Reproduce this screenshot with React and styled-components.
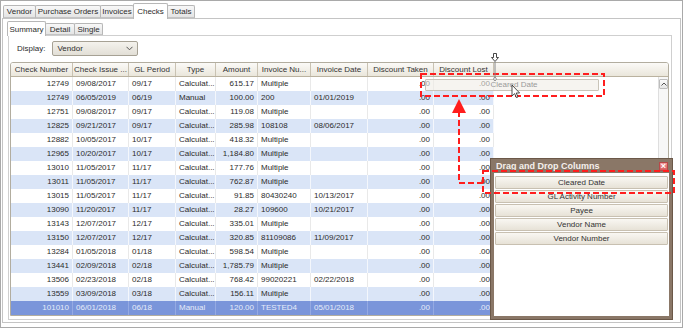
import React from "react";
import styled, { createGlobalStyle } from "styled-components";

const GlobalStyle = createGlobalStyle`
  html, body { margin: 0; padding: 0; background: #fff; }
  body { font-family: "Liberation Sans", Arial, sans-serif; }
  * { box-sizing: border-box; }
`;

const columns = [
  { title: "Check Number", width: 62, align: "right" },
  { title: "Check Issue ...", width: 56, align: "left" },
  { title: "GL Period", width: 47, align: "left" },
  { title: "Type", width: 40, align: "left" },
  { title: "Amount", width: 42, align: "right" },
  { title: "Invoice Nu...", width: 53, align: "left" },
  { title: "Invoice Date", width: 57, align: "left" },
  { title: "Discount Taken", width: 66, align: "right" },
  { title: "Discount Lost", width: 60, align: "right" },
];

const C = "Calculat...";
const rows = [
  ["12749", "09/08/2017", "09/17", C, "615.17", "Multiple", ""],
  ["12749", "06/05/2019", "06/19", "Manual", "100.00", "200", "01/01/2019"],
  ["12751", "09/08/2017", "09/17", C, "119.08", "Multiple", ""],
  ["12825", "09/21/2017", "09/17", C, "285.98", "108108", "08/06/2017"],
  ["12882", "10/05/2017", "10/17", C, "418.32", "Multiple", ""],
  ["12965", "10/20/2017", "10/17", C, "1,184.80", "Multiple", ""],
  ["13010", "11/05/2017", "11/17", C, "177.76", "Multiple", ""],
  ["13011", "11/05/2017", "11/17", C, "762.87", "Multiple", ""],
  ["13015", "11/05/2017", "11/17", C, "91.85", "80430240", "10/13/2017"],
  ["13090", "11/20/2017", "11/17", C, "28.27", "109600", "10/21/2017"],
  ["13143", "12/07/2017", "12/17", C, "335.01", "Multiple", ""],
  ["13150", "12/07/2017", "12/17", C, "320.85", "81109086", "11/09/2017"],
  ["13284", "01/05/2018", "01/18", C, "598.54", "Multiple", ""],
  ["13441", "02/09/2018", "02/18", C, "1,785.79", "Multiple", ""],
  ["13506", "02/23/2018", "02/18", C, "768.42", "99020221", "02/22/2018"],
  ["13559", "03/09/2018", "03/18", C, "156.11", "Multiple", ""],
  ["101010", "06/01/2018", "06/18", "Manual", "120.00", "TESTED4", "05/01/2018"],
].map((r) => [...r, ".00", ".00"]);

const mainTabs = [
  { label: "Vendor", width: 33 },
  { label: "Purchase Orders", width: 66 },
  { label: "Invoices", width: 34 },
  { label: "Checks", width: 35 },
  { label: "Totals", width: 28 },
];

const subTabs = [
  { label: "Summary", width: 39 },
  { label: "Detail", width: 30 },
  { label: "Single", width: 29 },
];

const extraColumns = ["Cleared Date", "GL Activity Number", "Payee", "Vendor Name", "Vendor Number"];

export default function App() {
  return (
    <>
      <GlobalStyle />
      <Frame>
        <TabStrip>
          {mainTabs.map((t) => (
            <Tab key={t.label} w={t.width} active={t.label === "Checks"}>
              {t.label}
            </Tab>
          ))}
        </TabStrip>
        <OuterPanel>
          <SubTabStrip>
            {subTabs.map((t) => (
              <SubTab key={t.label} w={t.width} active={t.label === "Summary"}>
                {t.label}
              </SubTab>
            ))}
          </SubTabStrip>
          <InnerPanel>
            <DisplayRow>
              <span>Display:</span>
              <Select>
                <span>Vendor</span>
                <svg width="7" height="5" viewBox="0 0 7 5">
                  <path d="M0.5 0.8 L3.5 3.8 L6.5 0.8" fill="none" stroke="#555" strokeWidth="1" />
                </svg>
              </Select>
            </DisplayRow>
            <Grid>
              <HeaderRow>
                {columns.map((c) => (
                  <HeadCell key={c.title} w={c.width}>
                    {c.title}
                  </HeadCell>
                ))}
              </HeaderRow>
              <GridBody>
                <Rows>
                  {rows.map((r, i) => {
                    const kind = i === rows.length - 1 ? "sel" : i % 2 ? "alt" : "plain";
                    return (
                      <Row key={i} kind={kind}>
                        {r.map((v, j) => (
                          <Cell key={j} w={columns[j].width} align={columns[j].align} kind={kind}>
                            {v}
                          </Cell>
                        ))}
                      </Row>
                    );
                  })}
                </Rows>
                <Filler />
                <ScrollBar>
                  <ScrollButton>
                    <svg width="6" height="4" viewBox="0 0 6 4">
                      <path d="M0.5 3.5 L3 1 L5.5 3.5" fill="none" stroke="#555" strokeWidth="1" />
                    </svg>
                  </ScrollButton>
                </ScrollBar>
              </GridBody>
            </Grid>
          </InnerPanel>
        </OuterPanel>

        <Ghost>Cleared Date</Ghost>

        <Popup>
          <PopupTitle>
            Drag and Drop Columns
            <CloseBox>×</CloseBox>
          </PopupTitle>
          <PopupBody>
            {extraColumns.map((c) => (
              <ColumnButton key={c}>{c}</ColumnButton>
            ))}
          </PopupBody>
        </Popup>

        <Overlay width="683" height="328" viewBox="0 0 683 328">
          <g fill="none" stroke="#ff1e1e" strokeWidth="2" strokeDasharray="6 3">
            <rect x="421" y="74" width="183" height="22" />
            <rect x="483" y="171" width="191" height="22" />
            <polyline points="483,183 459,183 459,113" />
          </g>
          <polygon points="452,113 466,113 459,99" fill="#ff1e1e" />
          <line x1="495" y1="62" x2="495" y2="79" stroke="#888" strokeWidth="1" />
          <path d="M493.5 79 L495 81 L496.5 79 L495 77 Z" fill="#fff" stroke="#777" strokeWidth="0.8" />
          <path
            d="M493.5 53.5 H496.5 V57.5 H498.5 L495 61.5 L491.5 57.5 H493.5 Z"
            fill="#fff"
            stroke="#333"
            strokeWidth="0.9"
          />
          <path
            d="M512 85 V96 L514.6 93.6 L516.4 97.6 L518 96.9 L516.2 93 H519.6 Z"
            fill="#fff"
            stroke="#222"
            strokeWidth="0.8"
          />
        </Overlay>
      </Frame>
    </>
  );
}

const Frame = styled.div`
  position: relative;
  width: 683px;
  height: 328px;
  border: 1px solid #a9a9a9;
  background: #fff;
  overflow: hidden;
  font-size: 8px;
  color: #2c2c2c;
`;

const TabStrip = styled.div`
  display: flex;
  align-items: flex-end;
  height: 17px;
  padding-left: 2px;
`;

const Tab = styled.div`
  position: relative;
  z-index: ${(p) => (p.active ? 2 : 1)};
  flex: 0 0 ${(p) => p.w}px;
  height: ${(p) => (p.active ? 16 : 13)}px;
  margin-bottom: ${(p) => (p.active ? -1 : 0)}px;
  margin-right: -1px;
  display: flex;
  align-items: center;
  justify-content: center;
  border: 1px solid #b7b7b7;
  border-bottom: ${(p) => (p.active ? "none" : "1px solid #c4c4c4")};
  border-radius: 2px 2px 0 0;
  background: ${(p) => (p.active ? "#fff" : "linear-gradient(#f8f8f8, #e4e4e4)")};
  white-space: nowrap;
  overflow: hidden;
`;

const OuterPanel = styled.div`
  margin-left: 1px;
  width: 679px;
  height: 305px;
  border: 1px solid #c4c4c4;
  padding: 2px 0 0 4px;
`;

const SubTabStrip = styled.div`
  display: flex;
  align-items: flex-end;
  height: 14px;
`;

const SubTab = styled(Tab)`
  height: ${(p) => (p.active ? 15 : 12)}px;
`;

const InnerPanel = styled.div`
  margin-left: 1px;
  width: 664px;
  height: 285px;
  border: 1px solid #cfcfcf;
  padding-top: 5px;
`;

const DisplayRow = styled.div`
  display: flex;
  align-items: center;
  gap: 7px;
  height: 15px;
  padding-left: 8px;
`;

const Select = styled.div`
  width: 86px;
  height: 15px;
  display: flex;
  align-items: center;
  justify-content: space-between;
  padding: 0 4px 0 4px;
  border: 1px solid #a6a194;
  border-radius: 2px;
  background: linear-gradient(#f4f2ed, #e2dfd6);
`;

const Grid = styled.div`
  margin: 6px 0 0 1px;
  width: 659px;
  height: 254px;
  border: 1px solid #b2ad9f;
  border-radius: 3px 3px 0 0;
  overflow: hidden;
  background: #fff;
`;

const HeaderRow = styled.div`
  display: flex;
  height: 14px;
  border-bottom: 1px solid #bab29f;
  background: linear-gradient(#fbfaf7, #eae6db);
`;

const HeadCell = styled.div`
  flex: 0 0 ${(p) => p.w}px;
  height: 13px;
  line-height: 13px;
  text-align: center;
  border-right: 1px solid #c9c2b2;
  white-space: nowrap;
  overflow: hidden;
  color: #333;
`;

const GridBody = styled.div`
  display: flex;
  height: 238px;
`;

const Rows = styled.div`
  flex: 0 0 483px;
  display: flex;
  flex-direction: column;
`;

const rowBg = { plain: "#ffffff", alt: "#dae5f7", sel: "#7a95da" };
const sepColor = { plain: "#e9e9e9", alt: "#f4f7fc", sel: "#95aae2" };

const Row = styled.div`
  display: flex;
  height: 14px;
  background: ${(p) => rowBg[p.kind]};
  color: ${(p) => (p.kind === "sel" ? "#e6ecf9" : "#2c2c2c")};
`;

const Cell = styled.div`
  flex: 0 0 ${(p) => p.w}px;
  padding: 0 3px;
  line-height: 14px;
  text-align: ${(p) => p.align};
  border-right: 1px solid ${(p) => sepColor[p.kind]};
  white-space: nowrap;
  overflow: hidden;
`;

const Filler = styled.div`
  flex: 1;
  background: #fff;
`;

const ScrollBar = styled.div`
  flex: 0 0 10px;
  padding-top: 2px;
  background: #f7f7f7;
  border-left: 1px solid #dedede;
`;

const ScrollButton = styled.div`
  height: 10px;
  display: flex;
  align-items: center;
  justify-content: center;
  border: 1px solid #bdbdbd;
  border-radius: 1px;
  background: linear-gradient(#fbfbfb, #e6e6e6);
`;

const Ghost = styled.div`
  position: absolute;
  left: 424px;
  top: 78px;
  width: 174px;
  height: 12px;
  line-height: 10px;
  padding-left: 4px;
  text-align: center;
  border: 1px solid #c9c4b8;
  border-radius: 1px;
  background: rgba(240, 237, 230, 0.6);
  color: #9a9a9a;
`;

const Popup = styled.div`
  position: absolute;
  left: 489px;
  top: 157px;
  width: 183px;
  height: 162px;
  display: flex;
  flex-direction: column;
  border: 1px solid #6b5848;
  background: #8a7767;
  padding: 0 3px 3px 3px;
`;

const PopupTitle = styled.div`
  position: relative;
  height: 14px;
  line-height: 14px;
  padding-left: 2px;
  color: #f4f0ec;
  font-weight: bold;
  font-size: 9px;
  white-space: nowrap;
`;

const CloseBox = styled.div`
  position: absolute;
  right: 1px;
  top: 3px;
  width: 9px;
  height: 9px;
  line-height: 7px;
  text-align: center;
  font-size: 9px;
  font-weight: bold;
  color: #fff;
  border: 1px solid #b84848;
  background: linear-gradient(#f19595, #d65858);
`;

const PopupBody = styled.div`
  flex: 1;
  background: #fff;
  padding: 3px 1px 0 1px;
  display: flex;
  flex-direction: column;
  gap: 1px;
`;

const ColumnButton = styled.div`
  height: 13px;
  line-height: 11px;
  text-align: center;
  border: 1px solid #c8c0b1;
  border-radius: 1px;
  background: linear-gradient(#f9f7f2, #e7e2d7);
  color: #333;
`;

const Overlay = styled.svg`
  position: absolute;
  left: -1px;
  top: -1px;
  pointer-events: none;
`;
